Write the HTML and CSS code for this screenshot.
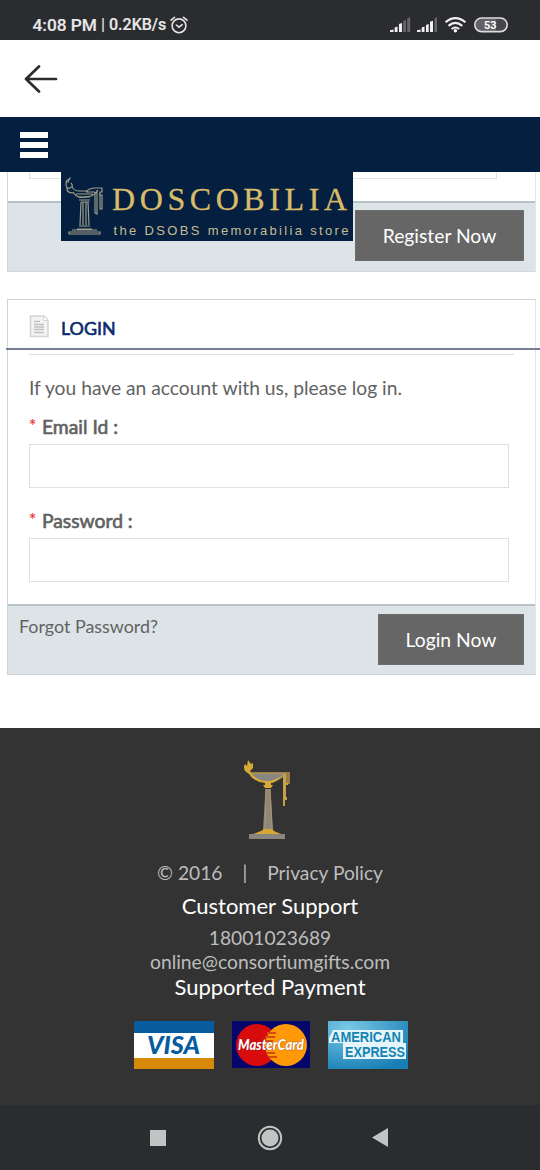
FILE: index.html
```html
<!DOCTYPE html>
<html lang="en">
<head>
<meta charset="utf-8">
<title>Doscobilia - Login</title>
<link rel="stylesheet" href="styles.css">
</head>
<body>
<div class="screen">
  <header class="status">
    <span class="time">4:08 PM</span><span class="sep">|</span><span class="speed">0.2KB/s</span>
    <svg class="alarm" width="18" height="18" viewBox="0 0 18 18" fill="none" stroke="#e4e4e6" stroke-width="1.600" stroke-linecap="round"><circle cx="9" cy="9.800" r="6.900"/><path d="M1 4.200L4.500 1.300M17 4.200L13.500 1.300M6.300 9L9 11.200L12.200 8.700"/></svg>
    <svg class="signals" width="118" height="18" viewBox="0 0 118 18">
      <g fill="#f2f2f2"><path d="M0 15V13.300L3.500 12.400V15ZM4.700 15V10.500L7.500 9.500V15ZM9 15V7L12 6V15Z"/><path d="M27 15V13.300L30.500 12.400V15ZM31.700 15V10.500L34.500 9.500V15ZM36 15V8L38.700 7V15ZM40 15V4.800L43 3.800V15Z"/></g>
      <g fill="#67676b"><path d="M13.200 15V4L16 3V15ZM17.200 15V1.500L20.200 0V15ZM44.500 15V1.500L47 0V15Z"/></g>
      <g fill="none" stroke="#f0f0f0" stroke-width="2.100"><path d="M55.500 5.300Q65.300-3 75.500 5.300M58.500 8.900Q65.300 3 72.300 8.900M61.600 12Q65.300 9 69.200 12"/></g><circle cx="65.400" cy="13.800" r="1.700" fill="#fff"/>
      <rect x="84.800" y="1" width="32.400" height="13.600" rx="6.800" fill="#47474a"/><path d="M101 2H106V13.800H92Q86 13.400 86 8T92 2Z" fill="#626264"/><rect x="84.800" y="1" width="32.400" height="13.600" rx="6.800" fill="none" stroke="#dededf" stroke-width="1.600"/>
      <text class="battery" x="94" y="12" textLength="12.500" lengthAdjust="spacingAndGlyphs">53</text>
    </svg>
  </header>

  <div class="backbar">
    <svg width="34" height="28" viewBox="0 0 34 28" fill="none" stroke="#2c2c2c" stroke-width="2.700" stroke-linecap="round" stroke-linejoin="round"><path d="M32 14H2M15 1.500L2 14L15 26.500"/></svg>
  </div>

  <nav class="menubar">
    <div class="burger"><i></i><i></i><i></i></div>
    <div class="brand">
      <svg width="292" height="69" viewBox="0 0 292 69">
        <g fill="none" stroke="#a2a08c" stroke-width="1.150">
          <path d="M9 8Q5 7 5 12Q5 17 9 16Q13 14 10 11M7 11Q7 6 10 6M6 15Q5 21 12 21M11 14Q12 19 18 19"/>
          <path d="M12 20Q16 27 24 25Q33 25 37 18M18 19H26Q29 16 34 16H41V20H39V37H41V23H38M36 18V42L34 41V20M25 20H34M15 22H32"/>
          <path d="M18 25H29M18 28H29M20 30H28M20 30L19 53M22 30V53M25 30V53M27 30L28 53M18 54H29M16 57H31M11 58H36M8 60H39V62H8Z"/>
        </g>
        <text class="logo-name" x="51" y="38" textLength="235">DOSCOBILIA</text>
        <text class="logo-tag" x="52.500" y="63" textLength="235">the DSOBS memorabilia store</text>
      </svg>
    </div>
  </nav>

  <main>
    <section class="register">
      <div class="register-body"><div class="field-end"></div></div>
      <div class="actions"><button class="button">Register Now</button></div>
    </section>

    <section class="login">
      <div class="login-head">
        <svg width="21" height="23" viewBox="0 0 21 23"><path d="M1.500 1H15L19 5V21.500H1.500Z" fill="#f3f3f1" stroke="#d3d4d6" stroke-width="1.500"/><path d="M14.500 1V5.500H19" fill="#fff" stroke="#d3d4d6"/><path d="M5 6.500H11M5 9.500H15M5 12H15M5 14.500H15M5 17.500H15" stroke="#bfc1c4" stroke-width="1.300"/></svg>
        <h2>LOGIN</h2>
      </div>
      <div class="rule"></div>
      <div class="login-body">
        <p>If you have an account with us, please log in.</p>
        <label><em>*</em>Email Id :</label>
        <input class="field" type="text">
        <label class="second"><em>*</em>Password :</label>
        <input class="field" type="password">
      </div>
      <div class="actions login-actions"><a>Forgot Password?</a><button class="button login-button">Login Now</button></div>
    </section>
  </main>

  <footer>
    <svg class="lamp" width="50" height="82" viewBox="0 0 50 82">
      <path d="M11 14H46V16Q38 23 30 23H23Q13 22 11 14Z" fill="#888683"/>
      <path d="M5 12Q3 8 5 5L7 7L8 1L11 5L13 4V9L10 12L12 15Q18 22 27 22Q34 22 43 16Q36 24 31 24V26H33L31 29H25L23 26H25V24Q14 23 9 15Z" fill="#d7aa38"/>
      <path d="M11 14H49V24H47V15" fill="none" stroke="#b99850" stroke-width="1.500"/>
      <path d="M43 15H46V24H48V26H46V38H47V41H45V47H43Z" fill="#c9a043"/>
      <path d="M25.500 30H30.500L33 71H23Z" fill="#8a8784"/>
      <path d="M26 30L25 70M30 30L32 70" stroke="#b5964d" stroke-width="1"/>
      <path d="M24 70H32L34 72L41 75H13L21 72Z" fill="#d7a735"/>
      <path d="M9 75H45V80H9Z" fill="#888580"/>
    </svg>
    <div class="legal"><span>© 2016</span><span>|</span><span>Privacy Policy</span></div>
    <h3 class="support">Customer Support</h3>
    <div class="phone">18001023689</div>
    <div class="mail">online@consortiumgifts.com</div>
    <h3 class="payment">Supported Payment</h3>
    <div class="cards">
      <svg width="80" height="48" viewBox="0 0 80 48"><path fill="#fff" d="M0 0H80V48H0Z"/><path fill="#075b9f" d="M0 0H80V12H0Z"/><path fill="#d88909" d="M0 37H80V48H0Z"/><text class="visa" x="13" y="33" textLength="53" lengthAdjust="spacingAndGlyphs">VISA</text></svg>
      <svg width="78" height="47" viewBox="0 0 78 47"><path fill="#05056c" d="M0 0H78V47H0Z"/><circle cx="25" cy="24" r="21" fill="#d80b0d"/><circle cx="54" cy="24" r="21" fill="#ff9907"/><path d="M35 12H44M33 16H43M33 20H41M33 28H41M34 32H43M36 36H45" stroke="#d44a0a" stroke-width="1.800"/><text class="master" x="6" y="29" textLength="66" lengthAdjust="spacingAndGlyphs">MasterCard</text></svg>
      <svg width="80" height="48" viewBox="0 0 80 48"><defs><radialGradient id="amex" cx="25%" cy="15%" r="95%"><stop offset="0" stop-color="#7ac8e6"/><stop offset="1" stop-color="#187fb5"/></radialGradient></defs><path fill="url(#amex)" d="M0 0H80V48H0Z"/><path d="M5 9H75V22H78V38H15V22H1V17Z" fill="#e4f4f8"/><g class="amex"><text x="3" y="20.500" textLength="70" lengthAdjust="spacingAndGlyphs">AMERICAN</text><text x="17" y="36" textLength="60" lengthAdjust="spacingAndGlyphs">EXPRESS</text></g></svg>
    </div>
  </footer>

  <div class="softkeys">
    <svg width="16" height="16"><path fill="#c2c3c3" d="M0 0H16V16H0Z"/></svg>
    <svg class="home" width="26" height="26"><circle cx="13" cy="13" r="11.200" fill="none" stroke="#c2c3c3" stroke-width="2"/><circle cx="13" cy="13" r="8.500" fill="#c2c3c3"/></svg>
    <svg width="16" height="19"><path fill="#c2c3c3" d="M0 9.500L16 0V19Z"/></svg>
  </div>
</div>
</body>
</html>
```
FILE: styles.css
```css
* { box-sizing: border-box; }
body { margin: 0; background: #fff; font-family: Lato, sans-serif; color: #626262; }
svg { display: block; flex: none; }
h2, h3, p { margin: 0; font-weight: 400; }
.screen { width: 540px; height: 1170px; overflow: hidden; display: flex; flex-direction: column; }

.status { height: 40px; flex: none; background: #2b2c2f; color: #e8e8ea; display: flex; align-items: center; padding: 10px 32px 0 32.500px; font: 500 16px/20px Roboto, sans-serif; white-space: nowrap; }
.time { width: 68.500px; font-size: 17.300px; -webkit-text-stroke: .2px #e8e8ea; }
.sep { width: 8px; }
.speed { width: 61px; -webkit-text-stroke: .2px #e8e8ea; }
.alarm { margin-top: -1px; }
.signals { margin-left: auto; margin-top: 2px; }
.battery { font: 700 11px Roboto, sans-serif; fill: #fff; }

.backbar { height: 77px; flex: none; display: flex; align-items: center; padding-left: 24px; }

.menubar { height: 55px; flex: none; position: relative; background: #041f3f; padding: 15px 20px; }
.burger { width: 28px; display: flex; flex-direction: column; gap: 4px; }
.burger i { height: 6px; background: #fff; }
.brand { position: absolute; left: 60.500px; top: 55px; width: 292px; height: 69px; background: #041f3f; z-index: 2; }
.logo-name { font: 32px "Liberation Serif", serif; fill: #d8bd69; stroke: #d8bd69; stroke-width: .3px; }
.logo-tag { font: 13px "Liberation Sans", sans-serif; fill: #c5bd91; }

main { height: 556px; flex: none; padding: 0 4px 0 7px; }
.register { height: 100px; border: 1px solid #d5d8d9; border-top: 0; border-right-color: #e3e6e8; display: flex; flex-direction: column; }
.register-body { height: 29px; padding: 0 38px 0 21px; }
.field-end { height: 7px; border: 1px solid #e1e2e3; border-top: 0; }
.actions { flex: 1; background: #dde4e7; border-top: 2px solid #b7c2c7; display: flex; justify-content: flex-end; align-items: flex-start; padding: 7px 11px 0; }
.button { width: 169px; height: 51px; margin: 0; padding: 0; border: 1px solid #6d6d6d; border-radius: 0; background: #666; color: #fff; font: 19.300px/46px Lato, sans-serif; text-align: center; }

.login { height: 376px; margin-top: 27px; border: 1px solid #d1d2d3; border-right-color: #e3e6e8; display: flex; flex-direction: column; }
.login-head { height: 48px; display: flex; align-items: center; gap: 11px; padding: 7px 0 0 21px; }
.login-head svg { margin-top: -3px; }
.login-head h2 { color: #0b2a70; font-size: 17.900px; line-height: 24px; padding-top: 1px; -webkit-text-stroke: .6px #0b2a70; }
.rule { height: 2px; margin: 0 -5px 0 -2px; background: #758095; }
.login-body { height: 250px; margin: 4px 21px 0; border-top: 1px solid #dedede; display: flex; flex-direction: column; }
.login-body p { padding-top: 21px; font-size: 19.250px; line-height: 24px; white-space: nowrap; }
label { display: flex; margin-top: 15px; font-size: 19.300px; line-height: 24px; -webkit-text-stroke: .65px #626262; }
label em { width: 13px; font-style: normal; font-size: 17px; line-height: 22px; color: #ed3434; -webkit-text-stroke: .2px #ed3434; }
.field { width: 480px; height: 44px; flex: none; margin: 5px 0 0; padding: 0 8px; border: 1px solid #dfdfdf; background: #fff; border-radius: 0; }
label.second { margin-top: 21px; }
.login-actions { justify-content: space-between; padding-top: 8px; }
.login-actions a { font-size: 17.900px; line-height: 24px; }
.login-button { width: 146px; }

footer { height: 377px; flex: none; background: #333; color: #bdbdbd; display: flex; flex-direction: column; align-items: center; padding-top: 31px; }
.lamp { margin-right: 11px; }
.legal { display: flex; gap: 20px; font-size: 19.200px; line-height: 24px; margin-top: 20px; }
footer h3 { color: #fff; font-size: 22px; line-height: 26px; }
.support { margin-top: 8px; }
.phone { font-size: 19.200px; line-height: 24px; margin-top: 7px; }
.mail { font-size: 19.300px; line-height: 24px; }
.cards { display: flex; gap: 18px; margin-top: 20.500px; padding-left: 2px; }
.visa { font: italic 900 24px Lato, sans-serif; fill: #075b9f; }
.master { font: italic 900 14.500px Lato, sans-serif; fill: #fff; stroke: #6b2030; stroke-width: .5px; paint-order: stroke; }
.amex { font: 700 14px "Liberation Sans", sans-serif; fill: #1484b5; }

.softkeys { height: 65px; flex: none; background: #2b2c2f; display: flex; align-items: center; justify-content: space-between; padding: 0 152px 0 150px; }
.home { margin-left: 1px; }
```
